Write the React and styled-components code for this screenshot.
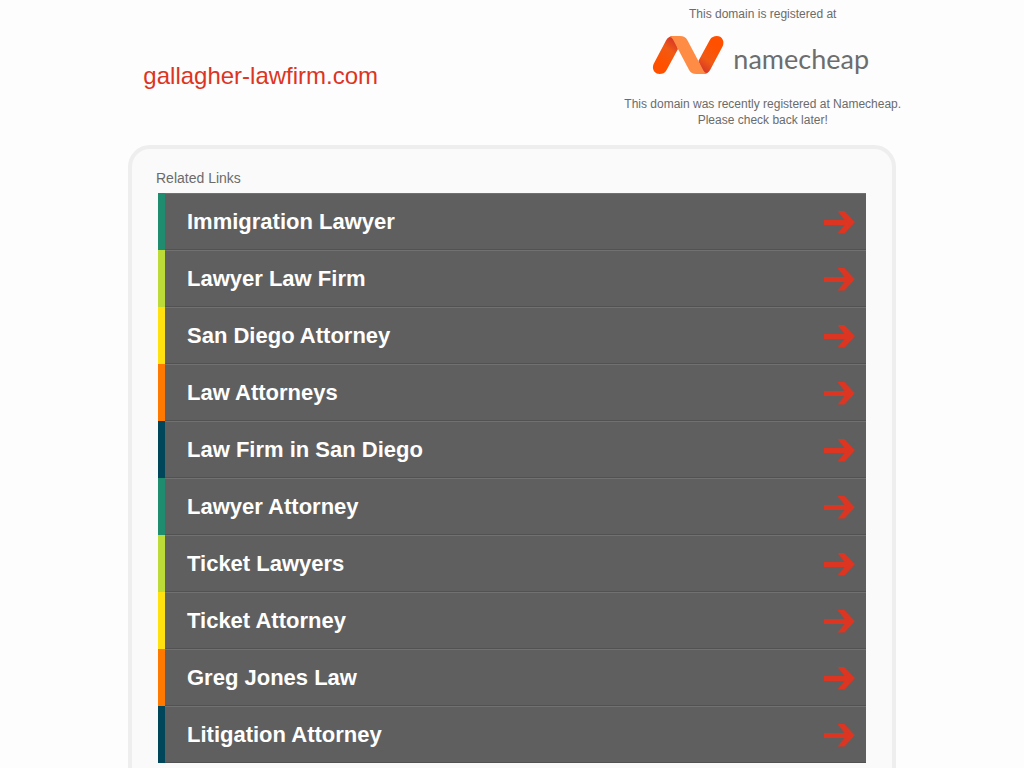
import styled, { createGlobalStyle } from "styled-components";

const GlobalStyle = createGlobalStyle`
  * {
    box-sizing: border-box;
  }

  body {
    margin: 0;
    background-color: #fdfdfd;
    color: #6b6b6b;
    font-family: "Liberation Sans", Arial, sans-serif;
  }
`;

const Header = styled.header`
  display: flex;
  justify-content: space-between;
  padding: 6px 12% 17px 14%;
`;

const Domain = styled.h1`
  margin: 0;
  padding-top: 56px;
  font-size: 24px;
  font-weight: 400;
  line-height: 28px;
  color: #dc3522;
`;

const Registrar = styled.div`
  display: flex;
  flex-direction: column;
  align-items: center;
  text-align: center;
`;

const Note = styled.p`
  margin: 0;
  font-size: 12px;
  line-height: 16px;
`;

const LogoLink = styled.a`
  display: flex;
  gap: 8px;
  padding: 13px 4px 21px 0;
  color: #6d6d6d;
  text-decoration: none;
`;

const Mark = styled.svg`
  width: 73px;
  height: 40px;
`;

const Wordmark = styled.span`
  font-family: Lato, "Open Sans", sans-serif;
  font-size: 27px;
  line-height: 48px;
  height: 40px;
`;

const Panel = styled.main`
  width: 75%;
  margin: 0 auto;
  padding: 21px 26px 26px;
  border: 4px solid #eee;
  border-radius: 22px;
  background-color: #fafafa;
`;

const PanelTitle = styled.h2`
  margin: 0 0 6px -2px;
  font-size: 14px;
  font-weight: 400;
  line-height: 17px;
`;

const LinkList = styled.ul`
  margin: 0;
  padding: 0;
  list-style: none;
`;

const Item = styled.li`
  border-left: 7px solid ${(props) => props.$color};
`;

const ItemLink = styled.a`
  display: flex;
  justify-content: space-between;
  align-items: center;
  height: 57px;
  padding: 0 10px 0 22px;
  border-top: 1px solid #717171;
  border-bottom: 1px solid #525252;
  background-color: #5f5f5f;
  color: #fff;
  font-size: 22px;
  font-weight: 700;
  text-decoration: none;
`;

const Arrow = styled.svg`
  width: 32px;
  height: 24px;
  fill: #dc3522;
`;

const colors = ["#1f8c70", "#bddb38", "#ffe10f", "#ff7800", "#00465a"];

const links = [
  "Immigration Lawyer",
  "Lawyer Law Firm",
  "San Diego Attorney",
  "Law Attorneys",
  "Law Firm in San Diego",
  "Lawyer Attorney",
  "Ticket Lawyers",
  "Ticket Attorney",
  "Greg Jones Law",
  "Litigation Attorney",
];

const leg =
  "M1.6 29 L14 5.5 C15.5 2.5 18 1 21.5 1 L26 14 L14.6 35 C13 38 10.5 39 7.5 39 C2.5 39 -.5 34 1.6 29Z";

const NamecheapMark = () => (
  <Mark viewBox="0 0 73 40" aria-hidden="true">
    <defs>
      <linearGradient id="fold" x1="0.3" y1="1" x2="0.8" y2="0">
        <stop offset="0.25" stopColor="#ff5000" />
        <stop offset="0.65" stopColor="#f05a14" />
        <stop offset="1" stopColor="#d2302b" />
      </linearGradient>
    </defs>
    <path d={leg} fill="url(#fold)" />
    <path d={leg} fill="url(#fold)" transform="rotate(180 36.2 20)" />
    <path
      d="M17.5 2 C18.5 1.3 20 1 21.5 1 H28 C31.5 1 34 2.5 35.3 5 L46.4 26 L51.4 35.5 C52.4 37.2 53.4 38 54.9 38 C53.9 38.7 52.4 39 50.9 39 H44.4 C40.9 39 38.4 37.5 37.1 35 L26 14 L21 4.5 C20 2.8 19 2 17.5 2 Z"
      fill="#ff8c44"
    />
  </Mark>
);

const App = () => {
  return (
    <>
      <GlobalStyle />
      <Header>
        <Domain>gallagher-lawfirm.com</Domain>
        <Registrar>
          <Note>This domain is registered at</Note>
          <LogoLink href="#">
            <NamecheapMark />
            <Wordmark>namecheap</Wordmark>
          </LogoLink>
          <Note>
            This domain was recently registered at Namecheap.
            <br />
            Please check back later!
          </Note>
        </Registrar>
      </Header>
      <Panel>
        <PanelTitle>Related Links</PanelTitle>
        <LinkList>
          {links.map((text, i) => (
            <Item key={text} $color={colors[i % colors.length]}>
              <ItemLink href="#">
                {text}
                <Arrow viewBox="0 0 32 24" aria-hidden="true">
                  <path d="M0 10 H20.5 L13.5 1 H20.5 L30.8 12.3 L20.5 23.5 H13.5 L20.5 15 H0 Z" />
                </Arrow>
              </ItemLink>
            </Item>
          ))}
        </LinkList>
      </Panel>
    </>
  );
};

export default App;
